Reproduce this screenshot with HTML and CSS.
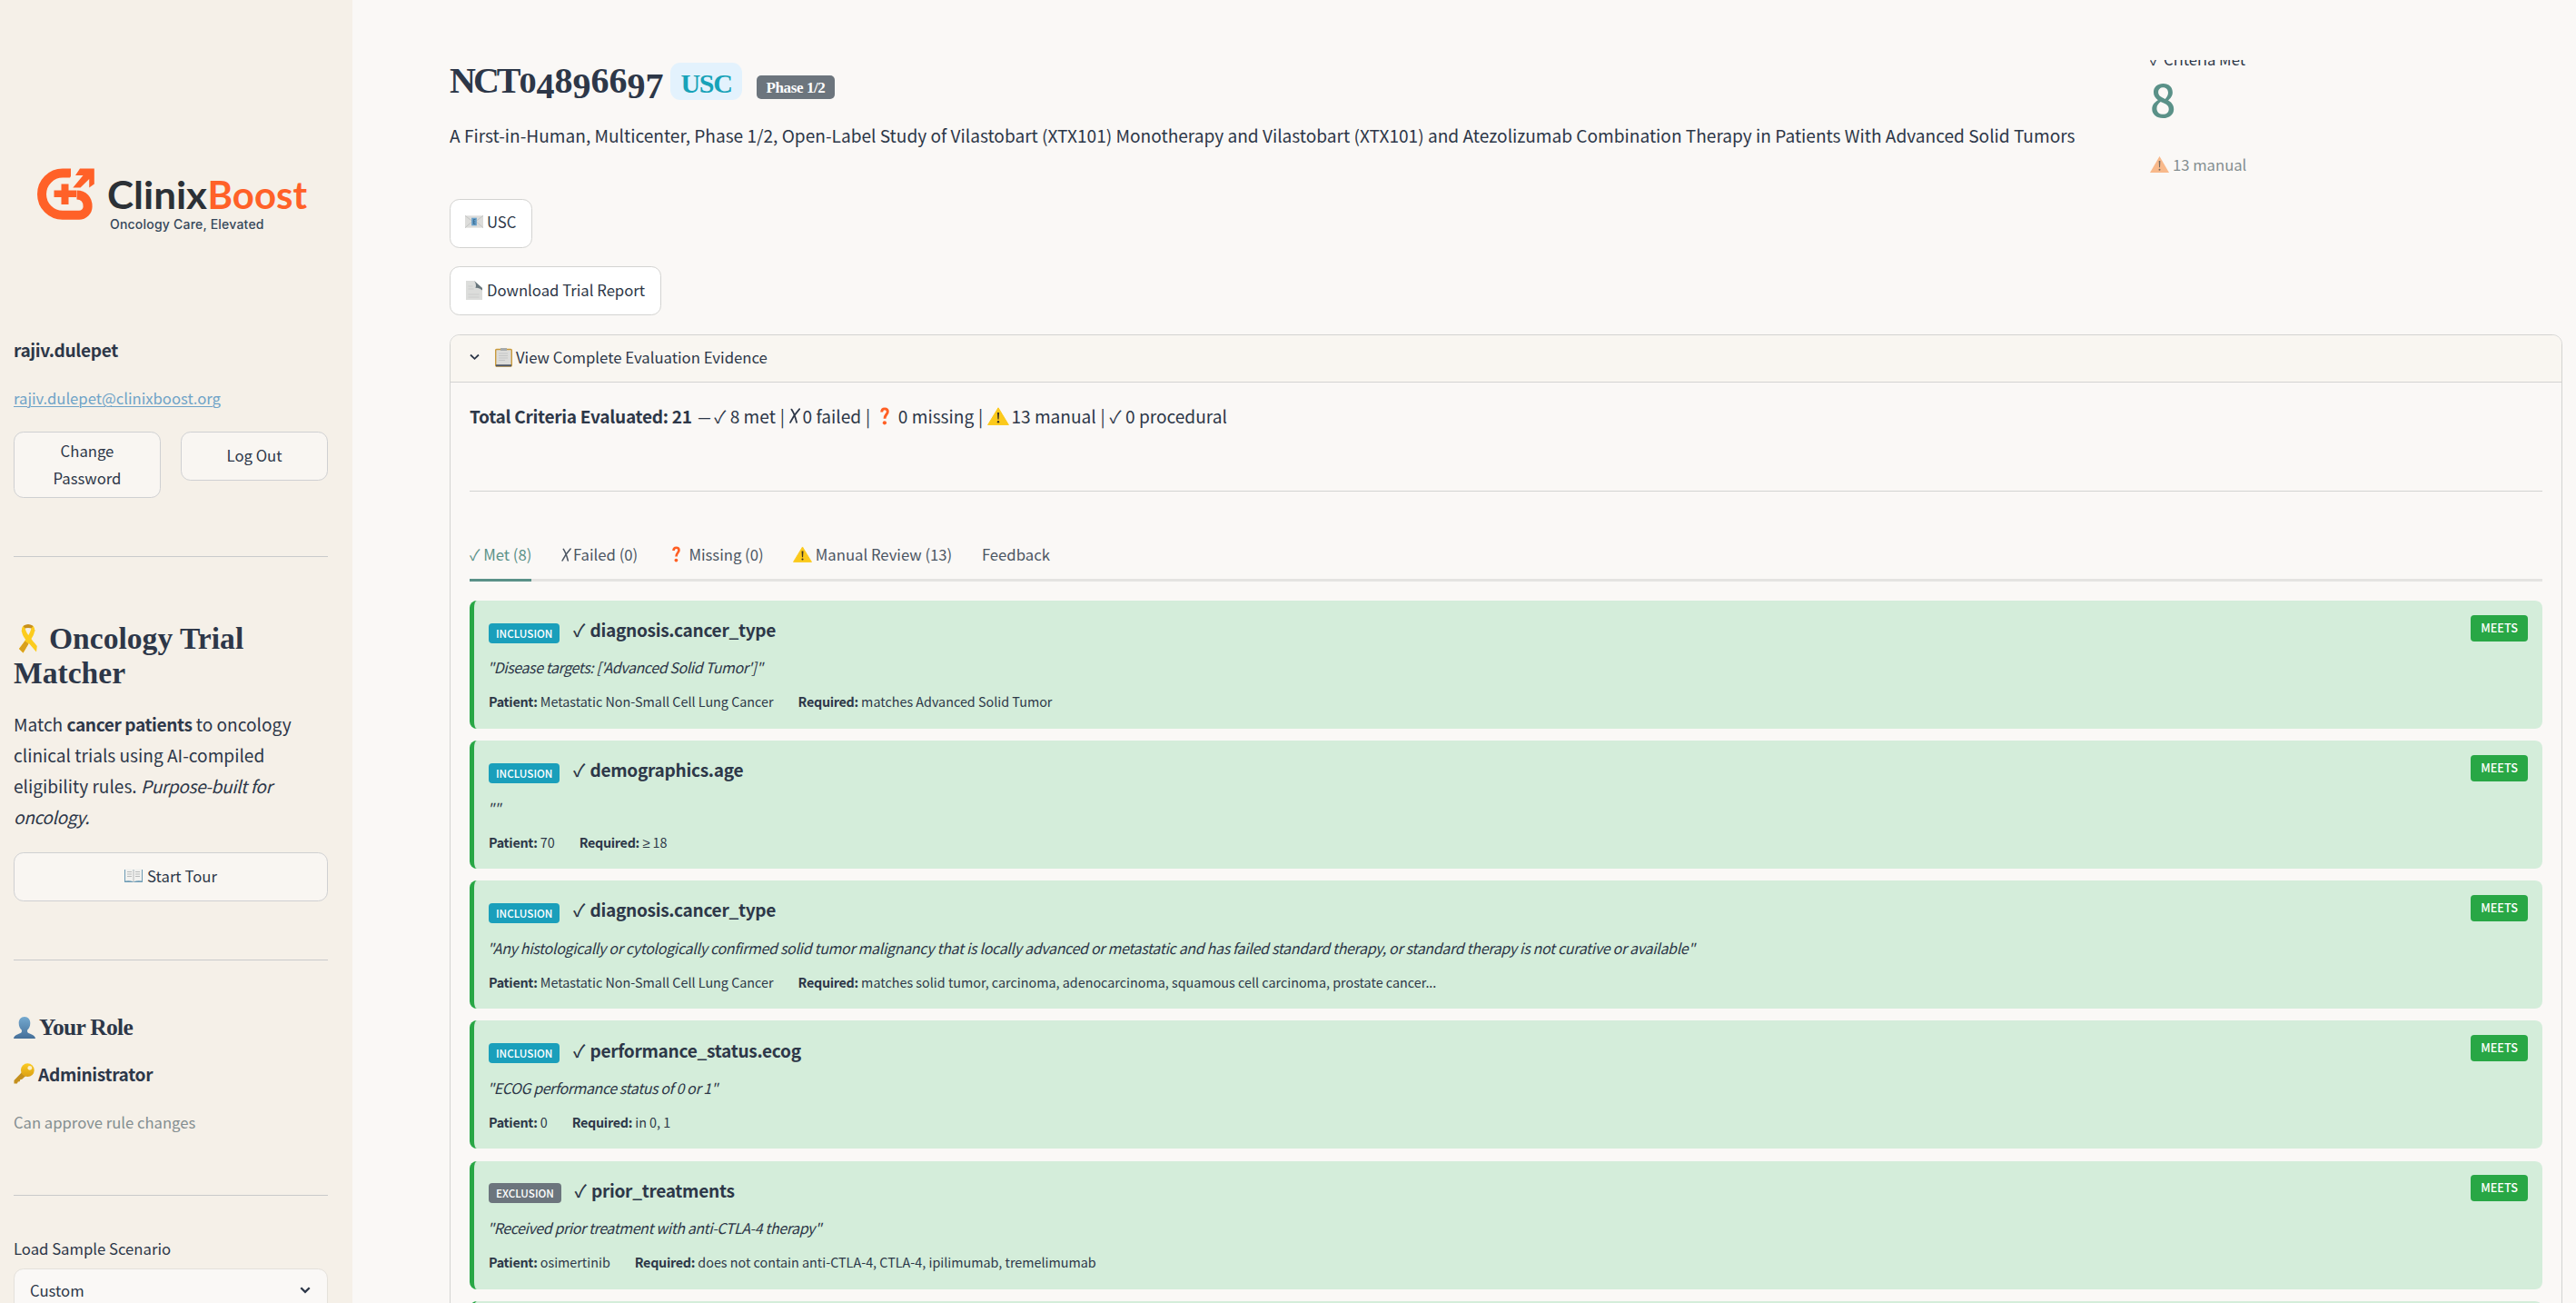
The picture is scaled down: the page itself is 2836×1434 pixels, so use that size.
FILE: index.html
```html
<!DOCTYPE html>
<html lang="en">
<head>
<meta charset="utf-8">
<title>ClinixBoost – Oncology Trial Matcher</title>
<link rel="stylesheet" href="styles.css">
</head>
<body>
<svg class="defs" width="0" height="0">
  <defs>
    <linearGradient id="gold" x1="0" y1="0" x2="0" y2="1"><stop offset="0" stop-color="#fbcb22"/><stop offset="1" stop-color="#dba015"/></linearGradient>
    <linearGradient id="bust" x1="0" y1="0" x2="0" y2="1"><stop offset="0" stop-color="#74a9cf"/><stop offset="1" stop-color="#456f99"/></linearGradient>
    <symbol id="warn" viewBox="0 0 24 20"><path d="M12 .8 23.4 19.6H.6z" fill="#fbc91b" stroke="#fbc91b" stroke-linejoin="round"/><path d="M10.9 6h2.2l-.5 7.6h-1.2z" fill="#3a3226"/><circle cx="12" cy="16.2" r="1.2" fill="#3a3226"/></symbol>
    <symbol id="quest" viewBox="0 0 10 20"><path d="M1.7 5.6C1.7 3 3.2 1.9 5 1.9c2 0 3.3 1.2 3.3 3.1 0 2.9-3.3 3.4-3.3 7.8" fill="none" stroke="#ff5f24" stroke-width="2.9"/><circle cx="4.9" cy="17.3" r="2.1" fill="#ff5f24"/></symbol>
    <symbol id="cross" viewBox="0 0 12 17"><path d="M2.4 1.6C4.6 4.8 6.4 9 8 15.800M11.200 1.200C7.400 5.400 3.600 10.400 1 15.900" fill="none" stroke="currentColor" stroke-width="1.8" stroke-linecap="round"/></symbol>
  </defs>
</svg>
<div class="app">
  <aside class="sidebar">
    <svg class="logo" viewBox="15 175 346 90" width="346" height="90">
      <path d="M78 190.6H69a23 23.1 0 0 0 0 46.2H87a9.6 9.6 0 0 0 9.6-9.6c0-8-4.600-12.700-12.100-12.700" fill="none" stroke="#ff6128" stroke-width="10"/>
      <path d="M82.500 184h6L76 198z" fill="#f5f0e8"/>
      <path d="M67.500 202.500h8v7H84v7.500h-8.500v8h-8v-8h-8v-7.500h8z" fill="#ff6128"/>
      <path d="M88 185.500h15.800v17l-5.600 4v-9.500L88.500 206.500H80.300L91.500 193h-8.500z" fill="#ff6128"/>
      <text x="118" y="230" class="logo-word" textLength="110" lengthAdjust="spacingAndGlyphs" fill="#2c3136">Clinix</text>
      <text x="228.500" y="230" class="logo-word" textLength="109.500" lengthAdjust="spacingAndGlyphs" fill="#ff6128">Boost</text>
      <text x="121" y="251.500" class="logo-tag" textLength="169.500" fill="#35475a">Oncology Care, Elevated</text>
    </svg>
    <div class="user-name">rajiv.dulepet</div>
    <a class="user-mail">rajiv.dulepet@clinixboost.org</a>
    <div class="user-actions">
      <button class="btn btn-tall">Change<br>Password</button>
      <button class="btn">Log Out</button>
    </div>
    <hr class="rule rule-a">
    <h1 class="app-title"><svg class="ico-ribbon" viewBox="0 0 22 33"><path d="M6 2.500Q11-.5 16 2.500L19 9q-3-4-8-4T3.500 9z" fill="#c8901c"/><path d="M5.500 2.800C2.500 7 4 12 7.500 17L20 31.500l.8-6.500C15 18 8.500 10.500 7.800 6z" fill="#fccc1e"/><path d="M16.500 2.800c3 4.200 1.500 9.200-2 14.200L5.500 32.500 1 28C7 20 13.500 11 14.200 6z" fill="#fccc1e"/><path d="M1 28l6.500-8.500 4 3L5.500 32.500z" fill="#d9a01e"/></svg>Oncology Trial<br>Matcher</h1>
    <p class="intro">Match <b>cancer patients</b> to oncology<br>clinical trials using AI-compiled<br>eligibility rules. <i>Purpose-built for<br>oncology.</i></p>
    <button class="btn btn-tour"><svg class="ico-book" viewBox="0 0 20 16"><path d="M0 1h20v14H0z" fill="#6d9bb5"/><path d="M1 .5Q6-.5 10 1.500 14-.5 19 .5V13.500Q14 12.500 10 14.500 6 12.500 1 13.500z" fill="#f1f1ef"/><path d="M10 1.500v13M3 3.500h5M3 6h5M3 8.500h5M12 3.500h5M12 6h5M12 8.500h5" stroke="#b9bbbb" fill="none"/></svg>Start Tour</button>
    <hr class="rule rule-b">
    <h3 class="role-title"><svg class="ico-bust" viewBox="0 0 24 24"><path d="M12 0c4 0 6.300 2.900 6.300 7 0 3.400-1.400 6-3.200 7.400v2c0 2.600 8.400 2.200 8.900 7.600H0c.5-5.400 8.900-5 8.900-7.600v-2C7.100 13 5.700 10.400 5.700 7 5.700 2.900 8 0 12 0z" fill="url(#bust)"/></svg>Your Role</h3>
    <div class="role-name"><svg class="ico-key" viewBox="0 0 24 24"><path d="M9.500 10.500.5 19.800V23.500H4L5 21.500l2-.5.5-2 2.200-.5 4.800-4.500z" fill="#c4901d"/><circle cx="16" cy="8" r="7.700" fill="url(#gold)"/><circle cx="18.600" cy="5.500" r="2.500" fill="#f9eecb"/></svg>Administrator</div>
    <div class="role-note">Can approve rule changes</div>
    <hr class="rule rule-c">
    <label class="field-label">Load Sample Scenario</label>
    <div class="select"><span>Custom</span><svg width="12" height="8" viewBox="0 0 12 8"><path d="M1.300 1.300 6 5.900l4.700-4.600" fill="none" stroke="#2d3748" stroke-width="2.300"/></svg></div>
  </aside>

  <main class="main">
    <header class="trial">
      <div class="trial-info">
        <h2 class="trial-head"><span class="nct"><span class="caps">NCT</span><span class="d0">0</span><span class="dl">4</span>8<span class="dl">9</span>66<span class="dl">97</span></span><span class="site-badge">USC</span><span class="phase-badge">Phase 1/2</span></h2>
        <p class="trial-name">A First-in-Human, Multicenter, Phase 1/2, Open-Label Study of Vilastobart (XTX101) Monotherapy and Vilastobart (XTX101) and Atezolizumab Combination Therapy in Patients With Advanced Solid Tumors</p>
        <button class="btn btn-main btn-site"><svg class="ico-mail" viewBox="0 0 21 14"><path d="M0 0h21v14H0z" fill="#dcdcda"/><path d="M0 0l10.500 8L21 0M0 14l8-7M21 14l-8-7" stroke="#c3c4c3" fill="none"/><path d="M7.500 2.500h6v9h-6z" fill="#67a0cb"/><path d="M12 4.500H9.800v5H12M9.800 7h2" stroke="#38688c" fill="none"/></svg>USC</button>
        <button class="btn btn-main btn-report"><svg class="ico-doc" viewBox="0 0 18 21"><path d="M0 0h9l9 8v13H0z" fill="#dcdddb"/><path d="M9 0q3 4 1.500 8Q14 7 18 10.500V8z" fill="#67757b"/><path d="M2.500 6h5M2.500 9h6M2.500 15h12M2.500 18h12" stroke="#cbcccb"/></svg>Download Trial Report</button>
      </div>
      <div class="metric">
        <div class="metric-label">✓ Criteria Met</div>
        <div class="metric-value">8</div>
        <div class="metric-delta"><svg class="ico-alert" viewBox="0 0 21 18"><path d="M10.500 0 21 18H0z" fill="#f8b98b"/><path d="M9.700 5h1.700l-.4 7.200h-.9z" fill="#756a60"/><circle cx="10.500" cy="14.700" r="1" fill="#756a60"/></svg>13 manual</div>
      </div>
    </header>

    <section class="expander">
      <div class="expander-head">
        <svg class="ico-chevron" width="11" height="8" viewBox="0 0 11 8"><path d="M1 1.500l4.500 4.300L10 1.500" fill="none" stroke="#2d3748" stroke-width="1.800"/></svg>
        <svg class="ico-clip" viewBox="0 0 19 21"><rect x=".7" y="1.500" width="17.600" height="18.500" rx="1" fill="#dcdcda" stroke="#c99a3c" stroke-width="1.400"/><path d="M6 0h7v3H6z" fill="#a7abac"/><path d="M4 6h10M4 8.500h10M4 11h10M4 13.500h7" stroke="#c5c6c6"/><path d="M1 19.300h17" stroke="#4d5563" stroke-width="2"/></svg>
        <span>View Complete Evaluation Evidence</span>
      </div>
      <div class="expander-body">
        <p class="totals"><b>Total Criteria Evaluated: 21</b><span class="t-dash">—</span><span class="t-chk">✓</span>8 met<span class="bar">|</span><svg class="ico-x"><use href="#cross"/></svg>0 failed<span class="bar">|</span><svg class="ico-q"><use href="#quest"/></svg>0 missing<span class="bar">|</span><svg class="ico-w"><use href="#warn"/></svg>13 manual<span class="bar">|</span><span class="t-chk">✓</span>0 procedural</p>
        <hr class="rule rule-d">
        <nav class="tabs">
          <span class="tab active">✓ Met (8)</span>
          <span class="tab"><svg class="ico-x small"><use href="#cross"/></svg>Failed (0)</span>
          <span class="tab"><svg class="ico-q small"><use href="#quest"/></svg>Missing (0)</span>
          <span class="tab"><svg class="ico-w small"><use href="#warn"/></svg>Manual Review (13)</span>
          <span class="tab">Feedback</span>
        </nav>
        <article class="card">
          <div class="card-head"><span class="kind">INCLUSION</span><span class="field"><em>✓</em>diagnosis.cancer_type</span><span class="verdict">MEETS</span></div>
          <p class="quote short">"Disease targets: ['Advanced Solid Tumor']"</p>
          <p class="facts"><span><b>Patient:</b> Metastatic Non-Small Cell Lung Cancer</span><span><b>Required:</b> matches Advanced Solid Tumor</span></p>
        </article>
        <article class="card">
          <div class="card-head"><span class="kind">INCLUSION</span><span class="field"><em>✓</em>demographics.age</span><span class="verdict">MEETS</span></div>
          <p class="quote short">""</p>
          <p class="facts"><span><b>Patient:</b> 70</span><span><b>Required:</b> <span class="geq">≥</span> 18</span></p>
        </article>
        <article class="card">
          <div class="card-head"><span class="kind">INCLUSION</span><span class="field"><em>✓</em>diagnosis.cancer_type</span><span class="verdict">MEETS</span></div>
          <p class="quote">"Any histologically or cytologically confirmed solid tumor malignancy that is locally advanced or metastatic and has failed standard therapy, or standard therapy is not curative or available"</p>
          <p class="facts"><span><b>Patient:</b> Metastatic Non-Small Cell Lung Cancer</span><span><b>Required:</b> matches solid tumor, carcinoma, adenocarcinoma, squamous cell carcinoma, prostate cancer...</span></p>
        </article>
        <article class="card">
          <div class="card-head"><span class="kind">INCLUSION</span><span class="field"><em>✓</em>performance_status.ecog</span><span class="verdict">MEETS</span></div>
          <p class="quote short">"ECOG performance status of 0 or 1"</p>
          <p class="facts"><span><b>Patient:</b> 0</span><span><b>Required:</b> in 0, 1</span></p>
        </article>
        <article class="card">
          <div class="card-head"><span class="kind exclusion">EXCLUSION</span><span class="field"><em>✓</em>prior_treatments</span><span class="verdict">MEETS</span></div>
          <p class="quote short">"Received prior treatment with anti-CTLA-4 therapy"</p>
          <p class="facts"><span><b>Patient:</b> osimertinib</span><span><b>Required:</b> does not contain anti-CTLA-4, CTLA-4, ipilimumab, tremelimumab</span></p>
        </article>
        <article class="card"></article>
      </div>
    </section>
  </main>
</div>
</body>
</html>
```
FILE: styles.css
```css
* { box-sizing: border-box; }
body {
  margin: 0;
  height: 1434px;
  overflow: hidden;
  background: #faf8f6;
  color: #2d3748;
  font-family: "Noto Sans CJK SC", "Noto Sans", sans-serif;
  font-size: 19.1px;
  line-height: 34.1px;
}
h1, h2, h3, p { margin: 0; }
svg { flex: none; }
.defs { position: absolute; }
.app { display: flex; height: 1434px; overflow: hidden; }

/* sidebar */
.sidebar {
  flex: none;
  width: 388px;
  height: 1434px;
  overflow: hidden;
  padding: 175px 27px 0 15px;
  background: #f5f0e8;
  white-space: nowrap;
}
.logo { display: block; }
.logo-word { font: 700 42px Lato, sans-serif; }
.logo-tag { font: 500 14px "Inter", sans-serif; }
.user-name { margin-top: 103px; font-weight: 700; letter-spacing: -0.33px; }
.user-mail {
  display: block;
  margin-top: 21px;
  font-size: 16.65px;
  line-height: 30px;
  color: #6fa3c7;
  text-decoration: underline;
  text-decoration-thickness: 1px;
  text-underline-offset: 2px;
}
.user-actions { display: grid; grid-template-columns: 1fr 1fr; gap: 22px; margin-top: 22px; align-items: start; }
.btn {
  display: flex;
  align-items: center;
  justify-content: center;
  height: 54px;
  padding: 0 0 2px;
  border: 1px solid #cfd0d2;
  border-radius: 10.67px;
  background: #f9f6f2;
  color: #2d3748;
  font: 400 16.7px/30px "Noto Sans CJK SC", sans-serif;
}
.btn-tall { height: 73px; }
.rule { height: 1px; margin: 0; border: 0; background: #c9cacb; }
.rule-a { margin-top: 64px; }
.app-title { margin-top: 70.5px; font: 700 33.6px/38.4px "Liberation Serif", serif; }
.ico-ribbon { width: 22px; height: 33px; margin: 0 12px -5px 5px; vertical-align: baseline; }
.intro { margin-top: 19.4px; }
.intro b { letter-spacing: -0.4px; }
.intro i { letter-spacing: -0.4px; }
.btn-tour { width: 100%; margin-top: 21.5px; }
.ico-book { width: 20px; height: 16px; margin-right: 5px; }
.rule-b { margin-top: 64px; }
.role-title { display: flex; margin-top: 58.4px; font: 700 25.5px/32px "Liberation Serif", serif; letter-spacing: -0.7px; }
.ico-bust { width: 24px; height: 24px; margin: 4px 4px 0 0; }
.role-name { display: flex; margin-top: 18.3px; font-weight: 700; letter-spacing: -0.33px; }
.ico-key { width: 23px; height: 23px; margin: 5px 4px 0 0; }
.role-note { margin-top: 21px; font-size: 16.65px; line-height: 30px; color: #848e90; }
.rule-c { margin-top: 65px; }
.field-label { display: block; margin-top: 42.7px; font-size: 16.7px; line-height: 30px; }
.select {
  display: flex;
  align-items: center;
  justify-content: space-between;
  height: 54px;
  margin-top: 7.3px;
  padding: 0 18px 6px 17px;
  border: 1px solid #e4e1db;
  border-radius: 10.67px;
  background: #faf8f6;
  font-size: 16.7px;
}

/* trial header */
.main { flex: none; width: 2448px; padding: 64px 15px 0 107px; white-space: nowrap; }
.trial { display: flex; }
.trial-info { width: 1872px; }
.trial-head { display: flex; align-items: baseline; height: 50px; font: 700 40px/50px "Liberation Serif", serif; }
.nct { width: 243px; letter-spacing: 0; }
.caps { letter-spacing: -3px; }
.d0 { display: inline-block; font-size: 32px; line-height: 20px; margin: 0 1px 0 3px; transform: scaleX(1.2); }
.dl { position: relative; top: 6px; }
.site-badge {
  width: 79px; height: 41px; padding-top: 4.8px;
  border-radius: 11px;
  background: #e3f2fd;
  color: #17a2b8;
  font-size: 30px; line-height: 36px; letter-spacing: -1.3px; text-align: center;
}
.phase-badge {
  width: 86px; height: 26px; margin-left: 16px; padding-top: 3.2px;
  border-radius: 5px;
  background: #6c757d;
  color: #fff;
  font-size: 17px; line-height: 22.8px; letter-spacing: -0.4px; text-align: center;
}
.trial-name { margin-top: 17.7px; }
.btn-main { background: #fff; border-color: #d3d3d1; height: 54px; padding: 0 17px 3px 16px; }
.btn-site { margin-top: 53px; }
.btn-report { margin-top: 20px; padding-bottom: 1px; }
.ico-mail { width: 20px; height: 14px; margin-right: 4px; }
.ico-doc { width: 18px; height: 21px; margin: 0 5px 0 1px; }

.metric { height: 140px; margin-top: 2px; overflow: hidden; }
.metric-label { margin-top: -16.3px; font-size: 16.65px; line-height: 30px; }
.metric-value { margin-top: -2.3px; font-size: 50px; font-weight: 500; line-height: 60px; color: #5a9188; }
.metric-delta { display: flex; align-items: center; margin-top: 28.3px; font-size: 16.65px; line-height: 30px; color: #848e90; }
.ico-alert { width: 21px; height: 18px; margin-right: 4px; }

/* evidence expander */
.expander { height: 1400px; margin-top: 21.2px; border: 1px solid #d3d3d1; border-radius: 10.67px; overflow: hidden; }
.expander-head {
  display: flex; align-items: center;
  height: 52px; padding: 0 0 2px 21px;
  border-bottom: 1px solid #d3d3d1;
  background: #f9f6f1;
  font-size: 16.73px; line-height: 30px;
}
.ico-chevron { margin-right: 17px; }
.ico-clip { width: 19px; height: 21px; margin-right: 4px; }
.expander-body { padding: 19.7px 21px 0; }
.totals { display: flex; align-items: baseline; }
.totals b { letter-spacing: -0.29px; }
.t-dash { margin: 0 2.5px 0 5px; transform: scaleX(.85); }
.t-chk { width: 17.5px; }
.bar { margin: 0 4.8px; }
.ico-x { width: 12px; height: 17px; margin-right: 3px; align-self: center; }
.ico-q { width: 10px; height: 20px; margin: 0 10px 0 6px; align-self: center; }
.ico-w { width: 24px; height: 20px; margin: 0 2.5px 0 0; align-self: center; }
.rule-d { margin-top: 65px; background: #d3d3d1; }
.tabs { display: flex; gap: 32.7px; height: 99px; padding-top: 54px; border-bottom: 3px solid #e4e3e1; color: #4c5663; font-size: 16.7px; line-height: 30px; }
.tab { display: flex; height: 45px; }
.tab .small { align-self: flex-start; }
.tab .ico-x { width: 11px; height: 15px; margin: 8px 2px 0 0; }
.tab .ico-q { width: 9px; height: 18px; margin: 6px 9.5px 0 5px; }
.tab .ico-w { width: 21px; height: 18px; margin: 6px 3.5px 0 0; }
.tab.active { color: #5a9188; border-bottom: 3px solid #5a9188; }

.card {
  height: 141px;
  margin-bottom: 13.2px;
  padding: 15.3px 16px 0;
  border-left: 5px solid #28a745;
  border-radius: 8px;
  background: #d4edda;
}
.tabs + .card { margin-top: 21px; }
.card-head { display: flex; align-items: flex-start; height: 34px; line-height: 34px; }
.kind {
  height: 22px; margin-top: 9.7px; padding: 0 8px;
  border-radius: 4px;
  background: #1a9fbb;
  color: #fff;
  font-size: 11.7px; font-weight: 500; line-height: 22px;
}
.kind.exclusion { background: #6c757d; }
.field { margin-left: 14.5px; font-weight: 700; letter-spacing: -0.3px; }
.field em { font-style: normal; font-weight: 500; display: inline-block; width: 18.5px; }
.verdict {
  width: 63px; height: 29px; margin: 0.7px 0 0 auto;
  border-radius: 4px;
  background: #28a745;
  color: #fff;
  font-size: 12.7px; font-weight: 500; line-height: 28px; text-align: center;
}
.quote { margin: 11.3px 0 0 -1.5px; font-size: 16px; font-style: italic; line-height: 26px; letter-spacing: -0.33px; }
.quote.short { letter-spacing: -0.42px; }
.facts { display: flex; gap: 27px; margin-top: 12px; font-size: 14.35px; line-height: 26px; }
.facts b { letter-spacing: -0.3px; }
.geq { font-family: "Noto Sans", sans-serif; font-size: 15px; line-height: 1; }
```
